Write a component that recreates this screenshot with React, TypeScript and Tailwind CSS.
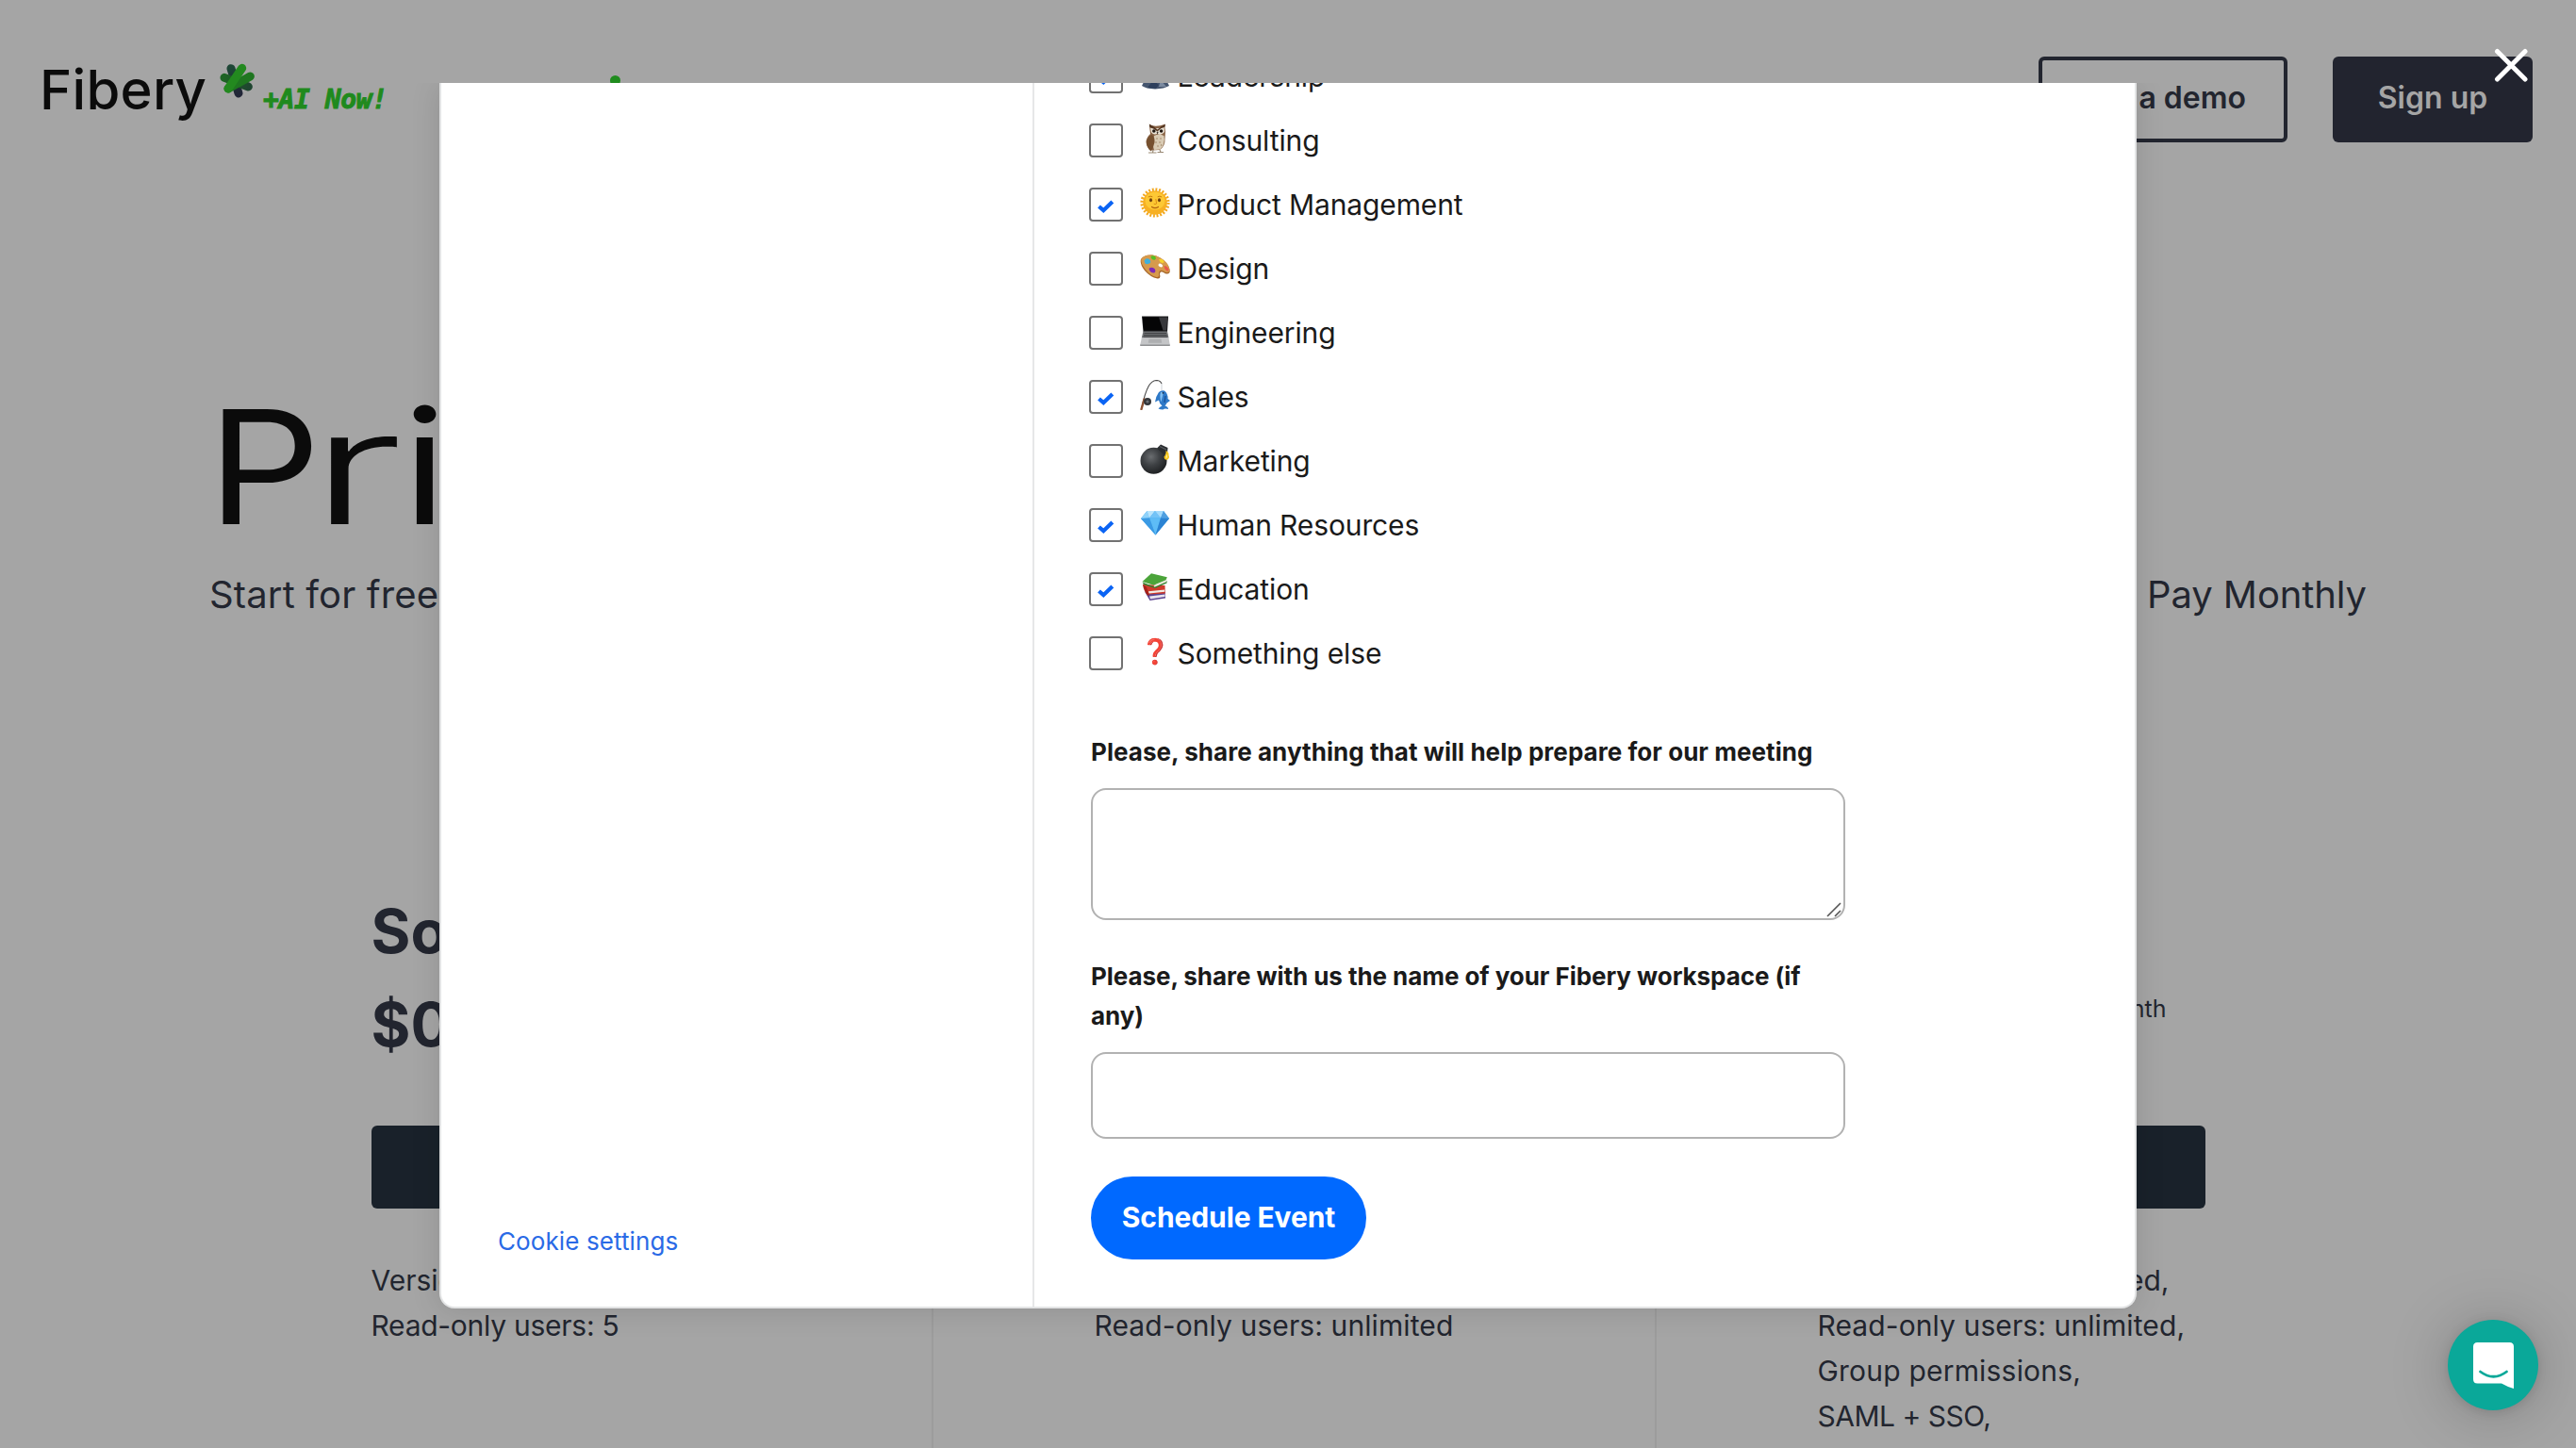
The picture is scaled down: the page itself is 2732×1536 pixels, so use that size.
import React from "react";

/* ---------- Emoji drawings, all on a 32×32 grid ---------- */

const emojiClass = "block h-8 w-8";

function Mountain() {
  return (
    <svg viewBox="0 0 32 32" className={emojiClass}>
      <path d="M2 28 L12 8 L17 4 L24 14 L31 28 Q26 31 16 31.5 Q6 31 2 28Z" fill="#46566f" />
      <path d="M12 8 L17 4 L24 14 L20 18 L17 14 L13 20Z" fill="#e8edf3" />
      <path d="M14 22 L20 27 L17 31 L8 30Z" fill="#2e3f5c" />
      <path d="M22 22 L28 29 L20 29Z" fill="#7b8aa0" />
    </svg>
  );
}

function Owl() {
  return (
    <svg viewBox="0 0 32 32" className={emojiClass}>
      <path d="M10 1.5 Q17 4 26 1 L27 9 L26.5 16 Q27 24 21 28 L13 28.5 Q7 26 6.5 20 Q6.5 15 11 11 L10.5 7Z" fill="#8a6547" />
      <path d="M15 13 Q20 10 25.5 13 Q27 22 21.5 27.5 L15 28 Q12 21 15 13Z" fill="#d9cbb4" />
      <path d="M7 19 Q8 14 12.500 12 Q16 14 15.500 20 Q14 26 12 29.500 Q6.500 26 7 19Z" fill="#76502f" />
      <path d="M11 4.500 Q18 6 25.500 4 L26 9 Q22 13.500 18.500 10.500 Q15 13 12 9.500Z" fill="#ece4d6" />
      <path d="M9.800 0.500 Q15 3 18.500 6.500 Q22 3 27 0.500 L26.500 3.500 Q22 4.500 18.500 8.500 Q15 5 10.300 4Z" fill="#553722" />
      <circle cx="14.800" cy="8" r="1.800" fill="#211812" />
      <circle cx="22.600" cy="8" r="1.800" fill="#211812" />
      <path d="M17.500 8.800 L19.700 8.800 L18.600 11.800Z" fill="#3d3229" />
      <path d="M18 15v2M22 15v2M17 19v2M21 19v2M19 23v2M22.500 22v2" stroke="#a48b6c" strokeWidth="0.900" />
      <path d="M14 28 L13.500 31 M21 28 L22 30.500 M9 31 H17.500 M18.500 30.500 H25" stroke="#9b8b77" strokeWidth="1.200" fill="none" />
    </svg>
  );
}

function Sun() {
  return (
    <svg viewBox="0 0 32 32" className={emojiClass}>
      <circle cx="16" cy="16" r="13.800" fill="none" stroke="#f3a81f" strokeWidth="3.600" strokeDasharray="1.900 1.713" />
      <circle cx="16" cy="16" r="12.800" fill="#f7b023" />
      <ellipse cx="16" cy="14" rx="10.500" ry="9.500" fill="#fdc834" />
      <ellipse cx="11.500" cy="13.200" rx="1.500" ry="2" fill="#70400f" />
      <ellipse cx="20.500" cy="13.200" rx="1.500" ry="2" fill="#70400f" />
      <path d="M8.800 10 Q11 8.300 13.300 9.800 M18.700 9.800 Q21 8.300 23.200 10" stroke="#c67c10" strokeWidth="1" fill="none" />
      <path d="M16.800 12 L17.600 17 Q16 18.200 14.700 17.200" stroke="#dd8e14" strokeWidth="1" fill="none" />
      <path d="M12.500 20.500 Q16 22.800 19.500 20.500" stroke="#b36310" strokeWidth="1.200" fill="none" strokeLinecap="round" />
    </svg>
  );
}

function Palette() {
  return (
    <svg viewBox="0 0 32 32" className={emojiClass}>
      <path d="M1 8 Q4 3 13 3.500 Q22 5 28 12 Q32.500 18 31.500 22 Q29 25 25 22 Q21 20 21 24 Q22.500 29 18.500 28.500 Q11 27 5 20 Q-0.500 13 1 8Z" fill="#a8672a" />
      <path d="M1.400 7.500 Q5 2.800 13 3.500 Q22 5 28 11.500 Q31.800 16 31.300 20.500 Q29 23.500 25 20.500 Q20.500 18.500 20 22.500 Q21 27.500 17.500 27 Q11 25.500 5.500 18.500 Q0.500 12 1.400 7.500Z" fill="#d69a4c" />
      <ellipse cx="21.800" cy="14.500" rx="2.400" ry="1.700" fill="#fff" transform="rotate(25 21.800 14.500)" />
      <path d="M4.500 9.500 Q6 6.500 9 7.500 Q12 9 11 12 Q8 14 5.500 12.500Z" fill="#3fb0dc" />
      <path d="M11.500 5 Q14 3.500 16.500 5.500 Q17.500 8 15.500 8.800 Q12 9 11.500 5Z" fill="#55c025" />
      <path d="M20 8 Q23.500 7 25.500 10 Q26 12.500 23.500 12 Q20.500 11 20 8Z" fill="#f6d32d" />
      <path d="M25.500 15 Q29 15 30.500 18.500 Q30.500 21.500 28 20 Q25.500 18 25.500 15Z" fill="#e9574b" />
      <path d="M9.500 18 Q12 15.500 15.500 18 Q17.500 21 15 22.500 Q10.500 22.500 9.500 18Z" fill="#7d2bb5" />
    </svg>
  );
}

function Laptop() {
  return (
    <svg viewBox="0 0 32 32" className={emojiClass}>
      <path d="M2 0.500 H30 L29 17 H3.500Z" fill="#1b1b1d" />
      <path d="M2.800 1.500 H29.300 L28.300 15.500 H4Z" fill="#050506" />
      <path d="M20 1.500 H29.300 L28.300 15.500 H24.500Z" fill="#37383b" />
      <path d="M3.400 16.500 H29 L30.500 23.500 H1.800Z" fill="#6f7174" />
      <path d="M4.500 18.500 H28 M4 20.500 H28.600 M3.500 22.300 H29" stroke="#404144" strokeWidth="1" />
      <path d="M1.800 23.500 H30.500 L31.800 31 H0.200Z" fill="#c4c5c7" />
      <path d="M9.500 24.500 H22.500 L23.200 28.800 H8.800Z" fill="#aeafb1" />
      <path d="M0.200 30.500 H31.800 V32 H0.200Z" fill="#8f9093" />
    </svg>
  );
}

function Fishing() {
  return (
    <svg viewBox="0 0 32 32" className={emojiClass}>
      <path d="M1.800 30 Q5 14 9.500 6 Q13 0.500 18 0.500 Q22 1 23 4" stroke="#4b4b4b" strokeWidth="1.100" fill="none" />
      <path d="M23 4 V11" stroke="#a7b3bd" strokeWidth="0.600" />
      <path d="M1.500 31 L4.500 20.500" stroke="#8d5335" strokeWidth="2.400" strokeLinecap="round" />
      <circle cx="8" cy="23" r="4" fill="#33363a" />
      <circle cx="8" cy="23" r="1.600" fill="#6d7278" />
      <path d="M20 13 Q22.500 10.500 26 11.500 Q30 15 29.500 20 L32 22 L28.500 24.500 Q27.500 26.500 26.500 27.500 Q30 28.500 30 31 Q26 30 24.500 31.500 Q21.500 31.500 19.500 30.500 Q21 28.500 23.500 27.500 Q20.500 25 20 21.500 L16 23.500 Q17 17 20 13Z" fill="#2e79c8" />
      <path d="M22 13 Q20.500 18 22.500 23.500 Q24 17 25 13Z" fill="#7fbdf0" />
      <circle cx="24.500" cy="13.800" r="0.900" fill="#10233e" />
      <path d="M27 17 L26 24" stroke="#174d92" strokeWidth="1.200" />
    </svg>
  );
}

function Bomb() {
  return (
    <svg viewBox="0 0 32 32" className={emojiClass}>
      <defs>
        <radialGradient id="bombShade" cx="0.4" cy="0.35" r="0.65">
          <stop offset="0" stopColor="#6a6d70" />
          <stop offset="0.5" stopColor="#3e4144" />
          <stop offset="1" stopColor="#202224" />
        </radialGradient>
      </defs>
      <circle cx="14.500" cy="17.800" r="14" fill="url(#bombShade)" />
      <path d="M18 4.500 L22 0.500 L29.500 4 L29 10 L25.500 11.500Z" fill="#2a2d30" />
      <path d="M21 2.500 L28 6" stroke="#585c60" strokeWidth="1.300" />
      <path d="M27.500 7 Q31 8.500 30.500 12 Q32 15 28.500 17 Q25.500 16.500 25.500 13.500 Q28 11 27.500 7Z" fill="#f5c51b" />
      <path d="M28.500 11 Q30 13.500 28.300 15.500 Q26.800 14.500 28.500 11Z" fill="#fff3a0" />
    </svg>
  );
}

function Gem() {
  return (
    <svg viewBox="0 0 32 32" className={emojiClass}>
      <path d="M7.500 3 H25 L31 11 L16.500 28.500 L1 11Z" fill="#45a9ee" />
      <path d="M7.500 3 L10 10.500 L1 11Z" fill="#8fd2fa" />
      <path d="M7.500 3 L16 3 L10 10.500Z" fill="#b9e5fd" />
      <path d="M16 3 L22 10.500 H10Z" fill="#72c3f7" />
      <path d="M16 3 H25 L22 10.500Z" fill="#a4dbfc" />
      <path d="M25 3 L31 11 L22 10.500Z" fill="#4f9fe0" />
      <path d="M10 10.500 H22 L16.500 28.500Z" fill="#5ebcf6" />
      <path d="M1 11 L10 10.500 L16.500 28.500Z" fill="#3b9ae4" />
      <path d="M22 10.500 L31 11 L16.500 28.500Z" fill="#2b83d3" />
    </svg>
  );
}

function Books() {
  return (
    <svg viewBox="0 0 32 32" className={emojiClass}>
      <path d="M5 20.500 L10.500 30 L27 27.500 L26.500 19Z" fill="#5a4390" />
      <path d="M10 25.500 L26.500 23.500 L26.500 26 L11 28.500Z" fill="#e6e3ee" />
      <path d="M3 13 L7.500 23.500 L26.800 22.500 L26.500 14Z" fill="#cf3a2b" />
      <path d="M9 20.200 L26.300 18.600 V20.800 L9.500 22.600Z" fill="#f1ece3" />
      <path d="M3 12.500 Q3.500 19 8 24.500 L10 24.500 L7 16Z" fill="#a52219" />
      <path d="M2.500 10.500 L15 15.500 L28.500 9 V11.500 L16 17 L4 13Z" fill="#2f7f2b" />
      <path d="M14.500 14.300 L28 8.300 V10.300 L15.500 15.800Z" fill="#ece9da" />
      <path d="M2.500 10 L12 1.200 L28.800 5.200 L27.500 8.200 L14.500 13.800Z" fill="#4ba43a" />
    </svg>
  );
}

function QuestionMark() {
  return (
    <span className="-mt-px block h-8 w-8 text-center font-['Noto_Color_Emoji'] text-[26px] leading-8">❓</span>
  );
}

/* ---------- Page behind the dialog ---------- */

function CloverLogo() {
  return (
    <svg viewBox="609 37 114 114" className="mt-[7px] h-[38px] w-[38px] shrink-0" fill="none" strokeLinecap="round" strokeWidth="27">
      <defs>
        <linearGradient id="petalDark" gradientUnits="userSpaceOnUse" x1="645" y1="53" x2="669" y2="133">
          <stop offset="0" stopColor="#1e4636" />
          <stop offset="1" stopColor="#222638" />
        </linearGradient>
        <linearGradient id="petalMid" gradientUnits="userSpaceOnUse" x1="622" y1="84" x2="702" y2="114">
          <stop offset="0" stopColor="#1e6424" />
          <stop offset="1" stopColor="#1f4530" />
        </linearGradient>
      </defs>
      <path d="M645 54 L669 133" stroke="url(#petalDark)" />
      <path d="M624 83 L700 112" stroke="url(#petalMid)" />
      <path d="M706 79 L636 118" stroke="#1f7620" />
      <path d="M680 53 L636 118" stroke="#23891f" />
    </svg>
  );
}

function Header() {
  return (
    <header className="flex h-[212px] items-start pl-[42px] pr-[46px] pt-[60px]">
      <div className="mt-[5px] w-[191px] text-[58px] font-medium leading-[60px] tracking-[0.3px] text-[#0b0b0b]">Fibery</div>
      <CloverLogo />
      <div className="ml-2 mt-[30px] w-[142px] whitespace-nowrap font-['DejaVu_Sans_Mono'] text-[28px] font-bold italic leading-[32px] tracking-[-0.4px] text-[#1f8a1d] [-webkit-text-stroke:1px_#1f8a1d]">
        +AI Now!
      </div>
      <span className="ml-[226px] mt-5 h-[11px] w-[11px] rounded-full bg-[#208c1e]" />
      <div className="ml-auto flex gap-12 text-[32px] font-semibold">
        <div className="flex h-[91px] w-[264px] items-center justify-end whitespace-nowrap rounded-md border-4 border-[#22252f] pb-1 pr-10 text-[#22252f]">
          Book a demo
        </div>
        <div className="flex h-[91px] w-[212px] items-center justify-center rounded-md bg-[#22242f] pb-1 text-[#a5a5a5]">Sign up</div>
      </div>
    </header>
  );
}

type Feature = { text: string; className?: string };
type Plan = { name: string; price: string; unit: string; features: Feature[] };

const plans: Plan[] = [
  {
    name: "Solo",
    price: "$0",
    unit: "",
    features: [{ text: "Version history" }, { text: "Read-only users: 5", className: "tracking-[-0.26px]" }],
  },
  {
    name: "",
    price: "",
    unit: "",
    features: [{ text: "" }, { text: "Read-only users: unlimited", className: "tracking-[0.1px]" }],
  },
  {
    name: "",
    price: "",
    unit: "month",
    features: [
      { text: "unlimited,", className: "w-[373px] text-right" },
      { text: "Read-only users: unlimited,", className: "tracking-[0.1px]" },
      { text: "Group permissions,", className: "tracking-[0.2px]" },
      { text: "SAML + SSO,", className: "tracking-[-0.5px]" },
    ],
  },
];

function PlanCard({ plan, last }: { plan: Plan; last: boolean }) {
  return (
    <div className={`w-[767px] shrink-0 pl-[171px] ${last ? "" : "border-r-2 border-[#9c9c9c]"}`}>
      <div className="h-[98px] text-[64px] font-bold leading-[98px]">{plan.name}</div>
      <div className="relative h-[100px] text-[64px] font-bold leading-[100px]">
        {plan.price}
        <span className="absolute left-0 top-[9px] w-[370px] text-right text-[25px] font-normal leading-[48px]">{plan.unit}</span>
      </div>
      <div className="mt-[57px] h-[88px] w-[411px] rounded-md bg-[#19212a]" />
      <ul className="mt-[52px] whitespace-nowrap text-[30px] leading-[48px]">
        {plan.features.map((f, i) => (
          <li key={i} className={`h-12 ${f.className ?? ""}`}>
            {f.text}
          </li>
        ))}
      </ul>
    </div>
  );
}

/* ---------- Dialog ---------- */

type Option = { label: string; checked: boolean; icon: () => React.ReactElement };

const options: Option[] = [
  { label: "Leadership", checked: true, icon: Mountain },
  { label: "Consulting", checked: false, icon: Owl },
  { label: "Product Management", checked: true, icon: Sun },
  { label: "Design", checked: false, icon: Palette },
  { label: "Engineering", checked: false, icon: Laptop },
  { label: "Sales", checked: true, icon: Fishing },
  { label: "Marketing", checked: false, icon: Bomb },
  { label: "Human Resources", checked: true, icon: Gem },
  { label: "Education", checked: true, icon: Books },
  { label: "Something else", checked: false, icon: QuestionMark },
];

function OptionRow({ option }: { option: Option }) {
  const Icon = option.icon;
  return (
    <li className="-ml-0.5 flex h-[68px] items-center">
      <span className="h-9 w-9 shrink-0 rounded-[4px] border-2 border-[#727272]">
        {option.checked && (
          <svg viewBox="2 2 32 32" className="block h-8 w-8">
            <path d="M10.500 20 L15.300 24.200 L24.800 15" fill="none" stroke="#0b64f4" strokeWidth="4.200" />
          </svg>
        )}
      </span>
      <span className="-mt-1 ml-[18px]">
        <Icon />
      </span>
      <span className="-mt-px ml-[7.500px] text-[30px] leading-[48px] tracking-[-0.12px]">{option.label}</span>
    </li>
  );
}

function Dialog() {
  return (
    <div className="absolute inset-x-0 top-[88px] flex h-[1360px] items-start justify-center overflow-hidden">
      <div className="flex h-[1300px] w-[1800px] overflow-hidden rounded-b-[16px] border-2 border-t-0 border-[#e3e4e5] bg-white shadow-[0_2px_32px_rgba(0,0,0,0.12)]">
        <div className="flex w-[629px] shrink-0 items-end border-r-2 border-[#e6e7e8] pb-[51px] pl-[60px]">
          <a className="text-[26px] leading-9 tracking-[0.1px] text-[#2a6ae6]">Cookie settings</a>
        </div>
        <div className="w-[860px] pl-[60px] text-[#1a1a1a]">
          <ul className="-mt-[41px]">
            {options.map((o) => (
              <OptionRow key={o.label} option={o} />
            ))}
          </ul>
          <label className="mt-[50px] block text-[26px] font-bold leading-[42px] tracking-[0.05px]">
            Please, share anything that will help prepare for our meeting
          </label>
          <div className="relative mt-[17px] h-[140px] w-[800px] rounded-2xl border-2 border-[#b2b2b2]">
            <svg viewBox="0 0 18 18" className="absolute bottom-0 right-0 h-[18px] w-[18px]" stroke="#555" strokeWidth="1.600">
              <path d="M1 16 L15 2 M9 16 L15 10" />
            </svg>
          </div>
          <label className="mt-[39px] block w-[790px] text-[26px] font-bold leading-[42px] tracking-[-0.06px]">
            Please, share with us the name of your Fibery workspace (if any)
          </label>
          <div className="mt-[17px] h-[92px] w-[800px] rounded-2xl border-2 border-[#b2b2b2]" />
          <div className="mt-10 flex h-[88px] w-[292px] items-center justify-center rounded-full bg-[#0069ff] pb-0.5 text-[30px] font-bold tracking-[-0.1px] text-white">
            Schedule Event
          </div>
        </div>
      </div>
    </div>
  );
}

function CloseIcon() {
  return (
    <svg viewBox="0 0 36 36" className="absolute left-[2645px] top-[51px] h-9 w-9" stroke="#fff" strokeWidth="5" strokeLinecap="round">
      <path d="M3.500 3.500 L33 33 M33 3.500 L3.500 33" />
    </svg>
  );
}

function ChatLauncher() {
  return (
    <div className="absolute bottom-10 right-10 flex h-24 w-24 items-center justify-center rounded-full bg-[#0aa899] shadow-[0_2px_12px_rgba(0,0,0,0.12),0_4px_64px_rgba(0,0,0,0.22)]">
      <svg viewBox="0 0 43 49" className="h-[49px] w-[43px]">
        <path d="M4.500 0 H38.500 Q43 0 43 4.500 V49 Q36 47 30 43.500 H4.500 Q0 43.500 0 39 V4.500 Q0 0 4.500 0Z" fill="#fff" />
        <path d="M7.500 31 Q21.500 41.500 35.500 31" fill="none" stroke="#0aa899" strokeWidth="2.800" strokeLinecap="round" />
      </svg>
    </div>
  );
}

export default function App() {
  return (
    <div className="relative h-[1536px] w-[2732px] overflow-hidden bg-[#a5a5a5] font-['Inter',sans-serif] text-[#22252f]">
      <Header />
      <h1 className="mt-[199px] flex h-[168px] pl-[220px] text-[168px] leading-[168px] text-[#0b0b0b]">
        <span className="block w-[108px] origin-left scale-x-[1.12]">P</span>
        <span className="block w-[99px] origin-left scale-x-[1.65] font-light">r</span>
        <span className="block w-12 origin-left scale-x-[1.15]">i</span>
      </h1>
      <div className="mt-[28px] flex justify-between pl-[222px] pr-[222px] text-[40px] leading-[48px]">
        <span className="tracking-[0.15px]">Start for free</span>
        <span className="tracking-[-0.1px]">Pay Monthly</span>
      </div>
      <div className="mt-[284px] flex h-[600px] pl-[222.5px]">
        {plans.map((p, i) => (
          <PlanCard key={i} plan={p} last={i === plans.length - 1} />
        ))}
      </div>
      <Dialog />
      <ChatLauncher />
      <CloseIcon />
    </div>
  );
}
